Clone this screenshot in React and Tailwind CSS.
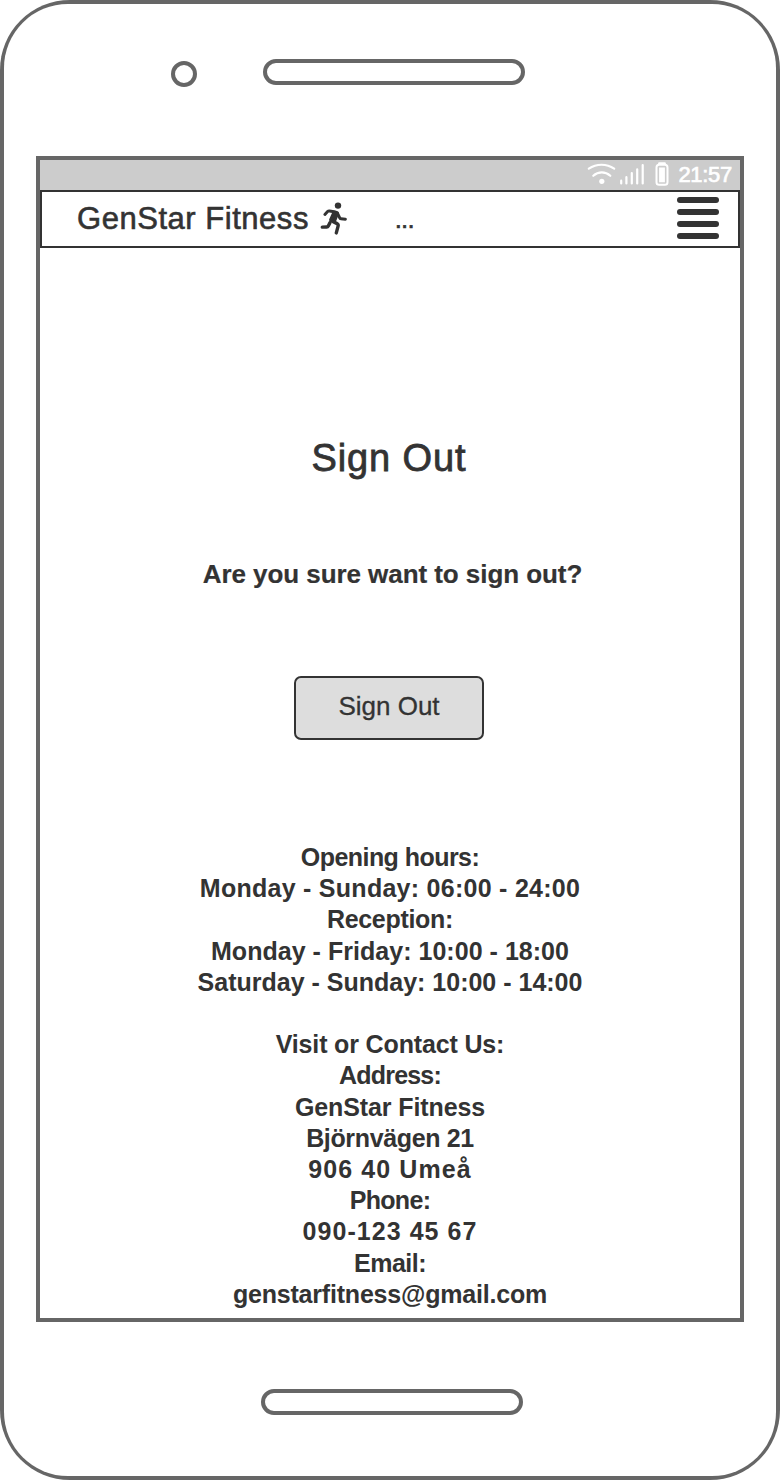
const contactLines = [
  { text: "Opening hours:", spacing: "tracking-[-0.55px]" },
  { text: "Monday - Sunday: 06:00 - 24:00", spacing: "tracking-[0.27px]" },
  { text: "Reception:", spacing: "tracking-[-0.3px]" },
  { text: "Monday - Friday: 10:00 - 18:00", spacing: "tracking-[0.03px]" },
  { text: "Saturday - Sunday: 10:00 - 14:00", spacing: "tracking-[0px]" },
  { text: "\u00a0", spacing: "tracking-normal" },
  { text: "Visit or Contact Us:", spacing: "tracking-[-0.15px]" },
  { text: "Address:", spacing: "tracking-[-0.8px]" },
  { text: "GenStar Fitness", spacing: "tracking-[-0.1px]" },
  { text: "Björnvägen 21", spacing: "tracking-[-0.35px]" },
  { text: "906 40 Umeå", spacing: "tracking-[1.1px]" },
  { text: "Phone:", spacing: "tracking-[-0.7px]" },
  { text: "090-123 45 67", spacing: "tracking-[1.05px]" },
  { text: "Email:", spacing: "tracking-[-0.5px]" },
  { text: "genstarfitness@gmail.com", spacing: "tracking-[-0.2px]" },
];

function RunnerIcon({ className }) {
  return (
    <svg className={className} width="28" height="34" viewBox="0 0 28 34" fill="none" stroke="currentColor" strokeWidth="3.4" strokeLinecap="round" strokeLinejoin="round">
      <circle cx="18" cy="3.6" r="3.2" fill="currentColor" stroke="none" />
      <path d="M4.9 12.4L7.6 9.5Q8.3 8.8 9.4 8.9L14.3 9.7L17.2 10.6L19.6 15.7Q20 16.7 21 16.8L25.4 17.2" strokeWidth="3" />
      <path d="M13.6 10.7L10.5 17.9L14.7 19.1L17.6 11.4Z" fill="currentColor" strokeWidth="2.8" />
      <path d="M11.3 18.8L17.1 21.6Q18.6 22.5 18.1 24.1L16.3 30.9" />
      <path d="M9.9 20.9L8.3 24Q7.8 25 6.7 25L2.3 25.1" />
    </svg>
  );
}

function StatusBar() {
  return (
    <div className="flex h-[30px] shrink-0 items-center justify-end bg-[#cccccc] pr-[8px] text-white">
      <svg width="86" height="30" viewBox="0 0 86 30" fill="none" stroke="currentColor" strokeLinecap="round">
        <path d="M3.8 8.7C11.5 3.4 21.5 3.4 29.2 8.7M8.3 15.8C13.3 11.2 20.3 11.2 25.3 15.8" strokeWidth="2.2" />
        <circle cx="16.8" cy="21.3" r="2.6" fill="currentColor" stroke="none" />
        <path d="M36.2 23.5V20.7M41.4 23.5V17.2M46.8 23.5V13M52.2 23.5V9.3M57.7 23.5V5" strokeWidth="2.2" />
        <rect x="71.5" y="4.8" width="11" height="20" rx="2.6" strokeWidth="2" />
        <path d="M74.3 3.5H79.7" strokeWidth="2.4" />
        <rect x="74.1" y="7.5" width="5.8" height="14.8" fill="currentColor" stroke="none" />
      </svg>
      <span className="ml-[7px] text-[22px] leading-[30px] tracking-[-0.3px] [-webkit-text-stroke:0.7px_white]">21:57</span>
    </div>
  );
}

function NavBar() {
  return (
    <div className="flex h-[58px] shrink-0 items-center border-2 border-[#333333] bg-white pr-[19px] pl-[35px]">
      <span className="text-[31px] leading-[54px] tracking-[0.53px] [-webkit-text-stroke:0.6px_#333333]">GenStar Fitness</span>
      <RunnerIcon className="ml-[11px]" />
      <span className="ml-[47px] pt-[2px] text-[24px] leading-[48px] tracking-[-0.3px] [-webkit-text-stroke:0.7px_#333333]">...</span>
      <div className="mb-[2px] ml-auto flex w-[42px] flex-col gap-[6px]">
        <div className="h-[6px] rounded-full bg-[#333333]" />
        <div className="h-[6px] rounded-full bg-[#333333]" />
        <div className="h-[6px] rounded-full bg-[#333333]" />
        <div className="h-[6px] rounded-full bg-[#333333]" />
      </div>
    </div>
  );
}

export default function App() {
  return (
    <div className="h-[1480px] w-[780px] rounded-[70px] bg-[#666666] p-1 font-['Liberation_Sans',sans-serif] text-[#333333]">
      <div className="flex h-full flex-col rounded-[64px] bg-white px-8">
        <div className="flex h-[152px] shrink-0 items-start pt-[55px] pl-[135px]">
          <div className="mt-[2px] size-[26px] rounded-full border-4 border-[#666666]" />
          <div className="ml-[66px] h-[26px] w-[262px] rounded-full border-4 border-[#666666]" />
        </div>
        <main className="flex h-[1166px] shrink-0 flex-col border-4 border-[#666666]">
          <StatusBar />
          <NavBar />
          <div className="flex flex-col items-center pr-[2px]">
            <h1 className="mt-[187px] text-[38px] leading-[46px] tracking-[0.9px] [-webkit-text-stroke:0.8px_#333333]">Sign Out</h1>
            <p className="mt-[77px] pl-[7px] text-[26px] leading-[32px] font-bold tracking-[-0.06px] [-webkit-text-stroke:0.2px_#333333]">Are you sure want to sign out?</p>
            <button className="mt-[86px] flex h-[64px] w-[190px] items-center justify-center rounded-[7px] border-2 border-[#333333] bg-[#dddddd] pb-1 text-[26px] [-webkit-text-stroke:0.3px_#333333]">
              Sign Out
            </button>
            <div className="mt-[102px] pl-[2px] text-center text-[25px] leading-[31.2px] font-bold whitespace-nowrap">
              {contactLines.map((line, i) => (
                <p key={i} className={line.spacing}>{line.text}</p>
              ))}
            </div>
          </div>
        </main>
        <div className="mt-[67px] ml-[225px] h-[26px] w-[262px] rounded-full border-4 border-[#666666]" />
      </div>
    </div>
  );
}
